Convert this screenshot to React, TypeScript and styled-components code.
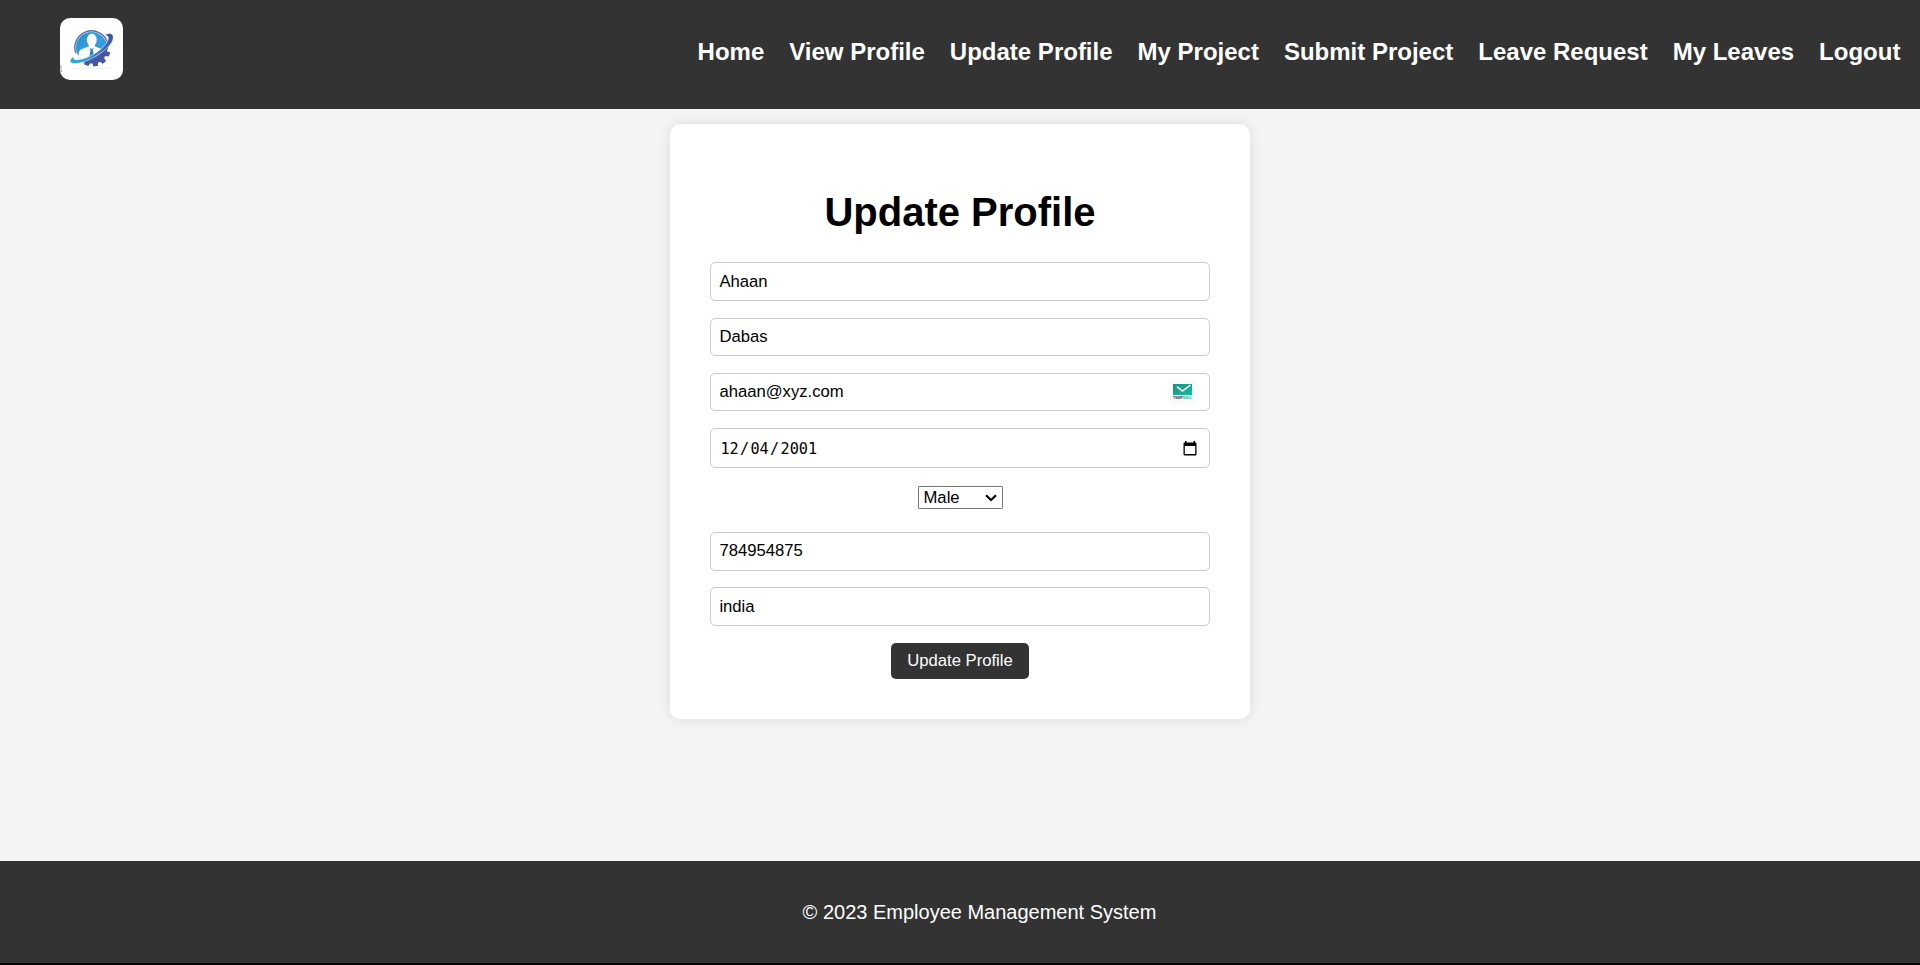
import React from "react";
import styled, { createGlobalStyle } from "styled-components";

const GlobalStyle = createGlobalStyle`
  * { box-sizing: border-box; }
  html, body { margin: 0; padding: 0; }
  body {
    font-family: Arial, "Liberation Sans", sans-serif;
    background: #f4f4f4;
    overflow: hidden;
  }
`;

const Page = styled.div`
  display: flex;
  flex-direction: column;
  height: 965px;
  border-bottom: 2px solid #000;
`;

const Header = styled.header`
  display: flex;
  justify-content: space-between;
  align-items: flex-start;
  height: 109px;
  padding: 18px 19.6px 0 60px;
  background: #333;
`;

const LogoBox = styled.div`
  display: flex;
  width: 63px;
  height: 62px;
  border-radius: 10px;
  overflow: hidden;
  background: #fff;
`;

const Nav = styled.nav`
  display: flex;
  gap: 25px;
  padding-top: 20px;
`;

const NavLink = styled.a`
  color: #fff;
  font-size: 24px;
  line-height: 28px;
  font-weight: 700;
  text-decoration: none;
  white-space: nowrap;
`;

const Main = styled.main`
  flex: 1;
  padding-top: 15px;
`;

const Card = styled.form`
  display: flex;
  flex-direction: column;
  align-items: center;
  width: 580px;
  height: 595px;
  margin: 0 auto;
  padding: 65px 40px 0;
  border-radius: 10px;
  background: #fff;
  box-shadow: 0 0 12.5px rgba(0, 0, 0, 0.1);
`;

const Title = styled.h1`
  margin: 0 0 27px;
  font-size: 40px;
  line-height: 46px;
`;

const Field = styled.div<{ $height: number; $after: number; $lift?: number }>`
  display: flex;
  align-items: center;
  width: 500px;
  height: ${(p) => p.$height}px;
  margin-bottom: ${(p) => p.$after}px;
  padding: 0 12px ${(p) => p.$lift ?? 0}px 8.4px;
  border: 1px solid #ccc;
  border-radius: 5px;
  background: #fff;
`;

const TextInput = styled.input`
  flex: 1;
  min-width: 0;
  height: 20px;
  padding: 0;
  border: 0;
  outline: 0;
  background: transparent;
  color: #000;
  font: 16.67px/20px Arial, "Liberation Sans", sans-serif;
`;

const DateValue = styled.div`
  display: flex;
  flex: 1;
  gap: 1.3px;
  padding: 2px 0 0 1px;
  font: 15.2px/20px "DejaVu Sans Mono", monospace;
`;

const MailBadge = styled.svg`
  width: 25px;
  height: 25px;
  margin: 0 2px 1px 0;
`;

const SelectBox = styled.div`
  display: flex;
  align-items: center;
  justify-content: space-between;
  width: 85px;
  height: 23px;
  margin-bottom: 23px;
  padding: 0 5px 0 5px;
  border: 1px solid #767676;
  border-radius: 1px;
  font-size: 16.67px;
  line-height: 21px;
`;

const Submit = styled.button`
  width: 138px;
  height: 36px;
  padding: 0;
  border: 0;
  border-radius: 5px;
  background: #333;
  color: #fff;
  font: 16.67px/20px Arial, "Liberation Sans", sans-serif;
`;

const Footer = styled.footer`
  height: 102px;
  padding: 40px 0 0 39px;
  background: #333;
  color: #fff;
  font-size: 20px;
  line-height: 23px;
  text-align: center;
`;

const links = [
  "Home",
  "View Profile",
  "Update Profile",
  "My Project",
  "Submit Project",
  "Leave Request",
  "My Leaves",
  "Logout",
];

function Logo() {
  return (
    <svg width="63" height="62" viewBox="0 0 63 62">
      <defs>
        <linearGradient id="disc" x1="0" y1="0" x2="1" y2="1">
          <stop offset="0" stopColor="#2a8fce" />
          <stop offset="0.55" stopColor="#35a0dc" />
          <stop offset="1" stopColor="#2b7dbd" />
        </linearGradient>
        <linearGradient id="orbit" x1="0" y1="1" x2="1" y2="0">
          <stop offset="0" stopColor="#22b0ea" />
          <stop offset="0.45" stopColor="#3b87c4" />
          <stop offset="1" stopColor="#45479b" />
        </linearGradient>
        <clipPath id="face"><circle cx="31.5" cy="29.5" r="15.6" /></clipPath>
      </defs>
      <circle cx="31.5" cy="29.5" r="16.7" fill="none" stroke="#5666a8" strokeWidth="1.3" strokeDasharray="54 60" transform="rotate(160 31.5 29.5)" />
      <g clipPath="url(#face)">
        <rect x="15" y="13" width="34" height="34" fill="url(#disc)" />
        <path d="M17 48 L19 34 Q19.6 31.6 22 31 L28.6 28.5 H35 L41.5 31 Q44 32 45 35 L41 46 Z" fill="#fff" />
        <path d="M30 29.8 h3.6 l-.9 2.2 1.4 7.5 -2.4 3 -2.4 -3 1.2 -7.5 Z" fill="#2b7fb8" />
      </g>
      <path d="M28.8 24 h6 v5 l-3 2 -3 -2 Z" fill="#fff" />
      <ellipse cx="31.8" cy="22" rx="4.9" ry="6.4" fill="#fff" />
      {/* gear teeth below the ring */}
      <path
        d="M21.5 44 L31 40.5 L40 35.5 L47.5 28.5 L48.5 29 L46.8 33.3 L50.3 34.6 L48.8 38.6 L45 38 L44.2 40.6 L46.2 43 L42.8 45.8 L39.8 43.8 L38 44.8 L38 47.8 L33.5 48.4 L32.4 45.6 L30 45.6 L28.4 48 L24.2 46.6 L24.5 44.6 Z"
        fill="#4655a5"
      />
      {/* tilted ring crossing the disc */}
      <path
        d="M44.5 17 C47.5 15.2 51.5 14.8 52.8 17.3 C54.6 21.5 50.5 27.5 45.5 31.5 C38.5 37.6 29 42.5 20.5 44.8 C14.5 46.2 9.6 45.4 10.2 42.4 C10.5 40.8 12.2 39.3 14 38.4 C12.8 41 14.4 42 18.2 41.7 C26 41 36.5 35.5 43 29 C48.5 23.6 51 17.4 44.5 17 Z"
        fill="url(#orbit)"
        stroke="#fff"
        strokeWidth="0.5"
      />
      <path d="M12 50.5 H50" stroke="#f1f1f1" strokeWidth="1" />
      <path d="M0.8 47 Q0.9 52 1.7 54" stroke="#777" strokeWidth="0.7" fill="none" />
    </svg>
  );
}

function TempMailIcon() {
  return (
    <MailBadge viewBox="0 0 25 25">
      <defs>
        <linearGradient id="mail" x1="0" y1="0" x2="1" y2="1">
          <stop offset="0" stopColor="#1d8f84" />
          <stop offset="1" stopColor="#1fb899" />
        </linearGradient>
      </defs>
      <rect width="25" height="25" rx="1.5" fill="#fafafa" />
      <rect x="3" y="5" width="19" height="11" fill="url(#mail)" />
      <path d="M7 7.7 L12.4 12 L20.5 6" fill="none" stroke="#fff" strokeWidth="1.5" />
      <text x="3" y="20" fontSize="3.9" fontWeight="700" fill="#1d3557" textLength="10" lengthAdjust="spacingAndGlyphs">TEMP</text>
      <text x="13" y="20" fontSize="3.9" fontWeight="700" fill="#1fb899" textLength="9" lengthAdjust="spacingAndGlyphs">MAIL</text>
    </MailBadge>
  );
}

function CalendarIcon() {
  return (
    <svg width="14" height="15" viewBox="0 0 14 15">
      <path
        fillRule="evenodd"
        d="M2 0h1.5v1.5h7V0H12v1.5h.6Q13.5 1.5 13.5 2.5V13.4Q13.5 14.4 12.5 14.4H1.5Q.5 14.4 .5 13.4V2.5Q.5 1.5 1.5 1.5H2ZM1.8 5V13.1H12.2V5Z"
        fill="#000"
      />
    </svg>
  );
}

export default function App() {
  return (
    <>
      <GlobalStyle />
      <Page>
        <Header>
          <LogoBox><Logo /></LogoBox>
          <Nav>
            {links.map((label) => (
              <NavLink key={label} href="#">{label}</NavLink>
            ))}
          </Nav>
        </Header>
        <Main>
          <Card>
            <Title>Update Profile</Title>
            <Field $height={39} $after={17}><TextInput defaultValue="Ahaan" /></Field>
            <Field $height={38} $after={17}><TextInput defaultValue="Dabas" /></Field>
            <Field $height={38} $after={17}>
              <TextInput defaultValue="ahaan@xyz.com" />
              <TempMailIcon />
            </Field>
            <Field $height={40} $after={18}>
              <DateValue>
                <span>12</span><span>/</span><span>04</span><span>/</span><span>2001</span>
              </DateValue>
              <CalendarIcon />
            </Field>
            <SelectBox>
              Male
              <svg width="12" height="8" viewBox="0 0 12 8">
                <path d="M1 1.2 L6 6 L11 1.2" fill="none" stroke="#000" strokeWidth="2.2" />
              </svg>
            </SelectBox>
            <Field $height={39} $after={16} $lift={2}><TextInput defaultValue="784954875" /></Field>
            <Field $height={39} $after={17}><TextInput defaultValue="india" /></Field>
            <Submit type="button">Update Profile</Submit>
          </Card>
        </Main>
        <Footer>© 2023 Employee Management System</Footer>
      </Page>
    </>
  );
}
